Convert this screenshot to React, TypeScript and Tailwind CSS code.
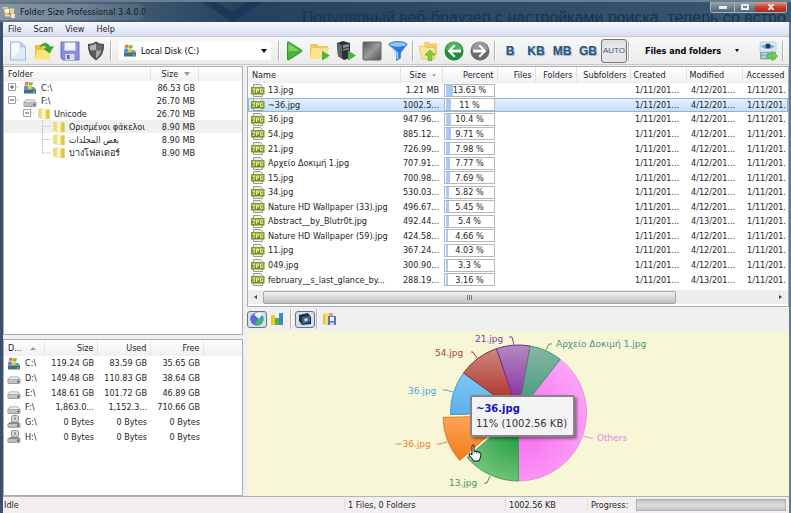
import type { ReactNode } from "react";
import clsx from "clsx";

const folders = [
  { name: "C:\\", size: "86.53 GB", depth: 0, icon: "system", toggle: "+" },
  { name: "F:\\", size: "26.70 MB", depth: 0, icon: "drive", toggle: "-" },
  { name: "Unicode", size: "26.70 MB", depth: 1, icon: "folder", toggle: "-" },
  { name: "Ορισμένοι φάκελοι", size: "8.90 MB", depth: 2, icon: "folder", selected: true },
  { name: "بعض المجلدات", size: "8.90 MB", depth: 2, icon: "folder" },
  { name: "บางโฟลเดอร์", size: "8.90 MB", depth: 2, icon: "folder" },
];

const drives = [
  { name: "C:\\", icon: "system", size: "119.24 GB", used: "83.59 GB", free: "35.65 GB" },
  { name: "D:\\", icon: "drive", size: "149.48 GB", used: "110.83 GB", free: "38.64 GB" },
  { name: "E:\\", icon: "drive", size: "148.61 GB", used: "101.72 GB", free: "46.89 GB" },
  { name: "F:\\", icon: "drive", size: "1,863.0...", used: "1,152.3...", free: "710.66 GB" },
  { name: "G:\\", icon: "optical", size: "0 Bytes", used: "0 Bytes", free: "0 Bytes" },
  { name: "H:\\", icon: "optical", size: "0 Bytes", used: "0 Bytes", free: "0 Bytes" },
];

const files = [
  { name: "13.jpg", size: "1.21 MB", percent: 13.63, modified: "4/12/201..." },
  { name: "~36.jpg", size: "1002.5...", percent: 11, modified: "4/12/201...", selected: true },
  { name: "36.jpg", size: "947.96...", percent: 10.4, modified: "4/12/201..." },
  { name: "54.jpg", size: "885.12...", percent: 9.71, modified: "4/12/201..." },
  { name: "21.jpg", size: "726.99...", percent: 7.98, modified: "4/12/201..." },
  { name: "Αρχείο Δοκιμή 1.jpg", size: "707.91...", percent: 7.77, modified: "4/12/201..." },
  { name: "15.jpg", size: "700.98...", percent: 7.69, modified: "4/12/201..." },
  { name: "34.jpg", size: "530.03...", percent: 5.82, modified: "4/12/201..." },
  { name: "Nature HD Wallpaper (33).jpg", size: "496.67...", percent: 5.45, modified: "4/12/201..." },
  { name: "Abstract__by_Blutr0t.jpg", size: "492.44...", percent: 5.4, modified: "4/13/201..." },
  { name: "Nature HD Wallpaper (59).jpg", size: "424.58...", percent: 4.66, modified: "4/12/201..." },
  { name: "11.jpg", size: "367.24...", percent: 4.03, modified: "4/12/201..." },
  { name: "049.jpg", size: "300.90...", percent: 3.3, modified: "4/12/201..." },
  { name: "february__s_last_glance_by...", size: "288.19...", percent: 3.16, modified: "4/13/201..." },
];

const slices = [
  { id: "others", percent: 39.51, from: "#fdb0f6", to: "#f56cf0", line: "#e58fdc" },
  { id: "s13", percent: 13.63, from: "#86d08c", to: "#2a9e48", line: "#4a9a58" },
  { id: "s36t", percent: 11, from: "#ffa45a", to: "#f47a1c", line: "#e07a2c" },
  { id: "s36", percent: 10.4, from: "#7cc8f2", to: "#5cb0ea", line: "#4a94bc" },
  { id: "s54", percent: 9.71, from: "#c98a7e", to: "#b01c1c", line: "#8c2a2a" },
  { id: "s21", percent: 7.98, from: "#b68ac0", to: "#7a1c9c", line: "#7c2a8c" },
  { id: "s1", percent: 7.77, from: "#86b8a4", to: "#3c9478", line: "#4a8c78" },
];

const labels = [
  { text: "21.jpg", x: 475, y: 342, color: "#8a3a9c", line: "M509 337h3l2 8" },
  { text: "54.jpg", x: 435, y: 356, color: "#b03a3a", line: "M471 352h2l4 6" },
  { text: "36.jpg", x: 408, y: 394, color: "#4aa8d8", line: "M443 390h3l7 2" },
  { text: "~36.jpg", x: 395, y: 447, color: "#e8822c", line: "M437 444h3l7-2" },
  { text: "13.jpg", x: 449, y: 486, color: "#3a9c50", line: "M484 483h3l3-7" },
  { text: "Others", x: 597, y: 441, color: "#e884dc", line: "M583 436l7 2h3" },
  { text: "Αρχείο Δοκιμή 1.jpg", x: 556, y: 347, color: "#4a9480", line: "M546 350l3-6h3" },
];

function DriveIcon({ kind }: { kind: string }) {
  if (kind === "folder") {
    return (
      <svg viewBox="0 0 12 13" className="h-[13px] w-3 shrink-0">
        <path d="M0 2.500L4 1v11l-4-1.500z" fill="#eedc84" />
        <path d="M4 2.500h7.500v9.500H4z" fill="#e8d468" />
        <path d="M4 .500l3 2v10.500l-3-2z" fill="#fdf7c8" />
        <path d="M7 2.500h1.500V12.500H7z" fill="#f4e694" />
        <path d="M8.500 2.500h3V12h-3z" fill="#dfc34a" />
      </svg>
    );
  }
  return (
    <svg viewBox="0 0 14 13" className="h-[13px] w-3.5 shrink-0">
      {kind === "system" && (
        <>
          <path d="M1 7.500L3 6h8l2 2v4H1z" fill="#6c98a8" />
          <path d="M1 9h12v3.500H1z" fill="#3f7088" />
          <path d="M2 1.500q2-1.500 3.500-.5l-.5 3q-2-1-3.500.5z" fill="#e8733a" />
          <path d="M6 1q2 1 4-.2l-.8 3.400Q7.500 5 5.500 4z" fill="#7cb63c" />
          <path d="M1.400 5q2-1.400 3.500-.5l-.6 3q-1.700-1-3.500.4z" fill="#4a8ee0" />
          <path d="M5.400 4.600q2 1 3.800-.1l-.8 3.300Q6.500 8.600 4.700 7.500z" fill="#f3cc3a" />
          <circle cx="11" cy="11" r=".8" fill="#8ef08a" />
        </>
      )}
      {kind === "drive" && (
        <>
          <path d="M.500 8.500L3 5.500h8l2.500 3v3.500l-1 1h-11l-1-1z" fill="#9a9a9a" />
          <path d="M1.500 8.300L3.500 6.300h7l2 2z" fill="#ededed" />
          <path d="M1.200 9h11.600v3H1.200z" fill="#c2c2c2" />
          <circle cx="11.300" cy="10.500" r="1" fill="#4a4a4a" />
        </>
      )}
      {kind === "optical" && (
        <>
          <rect x="4.500" y=".5" width="7" height="6.500" rx="2" fill="#dcdcdc" stroke="#8b8b8b" />
          <path d="M8 2v3" stroke="#8b8b8b" strokeWidth="1.500" />
          <path d="M.500 9L3 7h8.500l2 2v3l-1 .8h-11l-1-.8z" fill="#8a8a8a" />
          <path d="M1.300 9.200h11.400v2.500H1.300z" fill="#c8c8c8" />
          <circle cx="11" cy="10.500" r=".9" fill="#444" />
        </>
      )}
    </svg>
  );
}

function JpgIcon() {
  return (
    <svg viewBox="0 0 14 13" className="h-[13px] w-3.5 shrink-0">
      <path d="M2.500.5h7l2 2v10h-9z" fill="#ededed" stroke="#9a9a92" />
      <path d="M0 3h13.500v7.500H0z" fill="#76901e" />
      <path d="M.500 3.500h12.500v3H.5z" fill="#94aa38" />
      <path
        d="M1.500 5h2.500M3.200 5v3.500H1.500M5.500 9V5h2v2h-2M11.900 5H9.500v3.500h2.200V7h-1"
        fill="none"
        stroke="#eef2b8"
        strokeWidth=".9"
      />
    </svg>
  );
}

function Svg({ children }: { children: ReactNode }) {
  return (
    <svg viewBox="0 0 20 20" className="size-5 shrink-0">
      {children}
    </svg>
  );
}

function ToolButton({ label, active, children }: { label: string; active?: boolean; children: ReactNode }) {
  return (
    <button
      type="button"
      aria-label={label}
      className={clsx(
        "flex h-6 w-[26px] shrink-0 items-center justify-center rounded-[3px]",
        active && "border border-[#777] bg-[#e6e6e8] shadow-inner"
      )}
    >
      {children}
    </button>
  );
}

function Separator() {
  return <span className="mx-px h-5 w-0.5 shrink-0 border-l border-[#b2b2b2] bg-white" />;
}

function TitleBar() {
  return (
    <header className="relative flex h-[22px] shrink-0 items-center overflow-hidden border-t-2 border-[#6b7f90] bg-linear-to-r from-[#65788a] via-[#24425f] via-30% to-[#3b5670]">
      <div className="flex h-4 w-[146px] items-center gap-1 rounded-r-full bg-linear-to-r from-[#8795a2] via-[#74869a] to-[#4b637a] pl-0.5">
        <svg viewBox="0 0 14 13" className="h-[13px] w-3.5 shrink-0">
          <path d="M1 1h5l1 1.500h5v8H3z" fill="#e8d9a0" />
          <circle cx="5" cy="5" r="3" fill="#f4f4ee" stroke="#c39a5c" />
          <path d="M7 7l4 4" stroke="#b8813a" strokeWidth="2" />
          <path d="M9 8h4v4H9z" fill="#efe7c8" />
        </svg>
        <h1 className="text-[9px] whitespace-nowrap text-[#101820]">Folder Size Professional 3.4.0.0</h1>
      </div>
      <svg viewBox="0 0 60 20" className="ml-14 h-5 w-[60px] shrink-0">
        <path d="M0 0h14l16 10L46 0h14L30 20z" fill="#1c2f55" opacity=".7" />
      </svg>
      <p className="mt-3 ml-10 font-['Liberation_Sans'] text-base leading-4 whitespace-nowrap text-[#1b334c]">
        Популярный веб-браузер с настройками поиска, теперь со встро
      </p>
      <div className="absolute top-0 right-1 flex h-[11px] overflow-hidden rounded-b-[3px] border border-t-0 border-[#a6b2bf]">
        <button type="button" aria-label="Minimize" className="flex w-6 items-center justify-center border-r border-[#a6b2bf] bg-linear-to-b from-[#97a5b3] to-[#4f6377]">
          <span className="h-[3px] w-2 bg-[#e8ecf0]" />
        </button>
        <button type="button" aria-label="Maximize" className="flex w-5 items-center justify-center bg-linear-to-b from-[#97a5b3] to-[#4f6377]">
          <span className="h-1.5 w-2 border-2 border-[#e8ecf0]" />
        </button>
        <button type="button" aria-label="Close" className="flex w-[31px] items-center justify-center bg-linear-to-b from-[#e09a8c] via-[#c9412a] to-[#a92c1a]">
          <svg viewBox="0 0 8 6" className="h-1.5 w-2">
            <path d="M1.500 0l5 6M6.500 0l-5 6" stroke="#f4e4e0" strokeWidth="2" />
          </svg>
        </button>
      </div>
    </header>
  );
}

function Toolbar() {
  return (
    <div className="flex h-7 shrink-0 items-center border-b border-[#c8c8c8] bg-linear-to-b from-[#f8f8f8] to-[#ebebeb] pl-0.5">
      <ToolButton label="New">
        <Svg>
          <path d="M2.500 1h10l5 5v13h-15z" fill="#dcebfa" stroke="#9cb8dc" />
          <path d="M4 2h7v8l-7 7z" fill="#f8fcff" />
          <path d="M12.500 1v5h5z" fill="#b8d2f0" stroke="#9cb8dc" strokeWidth=".5" />
        </Svg>
      </ToolButton>
      <ToolButton label="Open">
        <Svg>
          <path d="M1 4h6l1.500 2H16v12H1z" fill="#e8c43c" />
          <path d="M3 9h15l-3 9.500H1z" fill="#fbe67c" />
          <path d="M6 6c2-5 8-5 10 0l3.500-.5L15.500 12 10 8l3-.8C11.500 4.500 8.500 4 6 6z" fill="#2fae2c" stroke="#1d8a22" strokeWidth=".5" />
        </Svg>
      </ToolButton>
      <ToolButton label="Save">
        <Svg>
          <path d="M1 1h18v18H3l-2-2z" fill="#8c8edb" stroke="#6c70c2" />
          <path d="M4.500 1.500h11v8h-11z" fill="#f0f2fc" />
          <path d="M5.500 13h9v6h-9z" fill="#d9dcf6" />
          <path d="M7 14h2.500v4H7z" fill="#595db4" />
        </Svg>
      </ToolButton>
      <ToolButton label="Permissions">
        <Svg>
          <path d="M10 .500Q13 3 18 3q.8 11-8 16.500Q1.200 14 2 3q5 0 8-2.500z" fill="#4c4c4c" />
          <path d="M10 2.500Q7 4.300 3.700 4.500q-.1 2.800.7 5H10z" fill="#b4b4b4" />
          <path d="M10 2.500q3 1.800 6.300 2 .1 2.800-.7 5H10z" fill="#6a6a6a" />
          <path d="M4.400 9.500H10v8q-4.200-3-5.600-8z" fill="#5c5c5c" />
          <path d="M15.600 9.500H10v8q4.200-3 5.600-8z" fill="#a4a4a4" />
        </Svg>
      </ToolButton>
      <Separator />
      <div className="relative mx-1.5 flex h-[18px] w-[152px] items-center bg-white pl-1">
        <DriveIcon kind="system" />
        <select aria-label="Drive" className="h-full min-w-0 flex-1 appearance-none bg-transparent pl-1 text-[9px] text-black">
          <option>Local Disk (C:)</option>
        </select>
        <span className="pointer-events-none absolute right-1 h-0 w-0 border-x-[3px] border-t-4 border-x-transparent border-t-black" />
      </div>
      <Separator />
      <ToolButton label="Start scan">
        <Svg>
          <path d="M3.500 1.500q0-1 1-.6L17.500 9q1 .9 0 1.800L4.500 19q-1 .4-1-.6z" fill="#48b43a" stroke="#2f9427" />
          <path d="M4.500 2.500L15 9.500l-10.500 1z" fill="#7fd45e" />
        </Svg>
      </ToolButton>
      <ToolButton label="Scan folder">
        <Svg>
          <path d="M0 3h7l1.500 2H18v13H0z" fill="#ecc95c" />
          <path d="M2 7h17l-2 11H0z" fill="#fbe48c" />
          <path d="M12 10l8 4.500-8 5z" fill="#48b53c" />
        </Svg>
      </ToolButton>
      <ToolButton label="Scan computer">
        <Svg>
          <path d="M1 2l6-2 7 2v15l-6 2-6-4z" fill="#2d2f36" />
          <path d="M1 2l5 2v13l-4-2z" fill="#60646e" />
          <path d="M7 4l6-1v3L7 7zM7 8l6-1v1.500L7 9.500z" fill="#8a8e98" />
          <path d="M12 9.500l8 5-8 5z" fill="#48b53c" />
        </Svg>
      </ToolButton>
      <ToolButton label="Stop">
        <svg viewBox="0 0 20 20" className="size-5 shrink-0">
          <defs>
            <linearGradient id="stop" x1="0" y1="0" x2="1" y2="1">
              <stop offset="0" stopColor="#555" />
              <stop offset=".5" stopColor="#9a9a9a" />
              <stop offset="1" stopColor="#505050" />
            </linearGradient>
          </defs>
          <rect x="1" y="1" width="18" height="18" rx="1" fill="url(#stop)" stroke="#666" />
        </svg>
      </ToolButton>
      <ToolButton label="Filter">
        <Svg>
          <path d="M1 3l7.500 9v7.500l4-2.500v-5L19 3z" fill="#2a7be0" stroke="#1c5cb8" strokeWidth=".5" />
          <ellipse cx="10" cy="3.500" rx="9" ry="2.800" fill="#8cc6fa" stroke="#2a6fd0" />
          <path d="M4 7l5.500 5v6" fill="none" stroke="#a6d6ff" strokeWidth="1.500" />
        </Svg>
      </ToolButton>
      <Separator />
      <ToolButton label="Up one level">
        <Svg>
          <path d="M6 1h5l1 1.500h7V14H8z" fill="#f0cf68" />
          <path d="M1 5h6l1 1.500h9V18H4z" fill="#fae596" stroke="#dcb64c" strokeWidth=".6" />
          <path d="M12 9l5 5h-3v5.500h-4V14H7z" fill="#7cd140" stroke="#4f9c24" strokeWidth=".6" />
        </Svg>
      </ToolButton>
      <ToolButton label="Back">
        <Svg>
          <circle cx="10" cy="10" r="9.500" fill="#218a34" />
          <path d="M2 9a8 8 0 0 1 16 0q-8-3-16 0z" fill="#53b45c" />
          <path d="M10 3.500L3.500 10l6.500 6.500 1.500-1.500L8 11.500h9v-3H8L11.500 5z" fill="#fff" />
        </Svg>
      </ToolButton>
      <ToolButton label="Forward">
        <Svg>
          <circle cx="10" cy="10" r="9.500" fill="#6c6c6c" />
          <path d="M2 9a8 8 0 0 1 16 0q-8-3-16 0z" fill="#999" />
          <path d="M10 3.500l6.500 6.500-6.500 6.500L8.500 15l3.500-3.500H3v-3h9L8.500 5z" fill="#fff" />
        </Svg>
      </ToolButton>
      <Separator />
      {["B", "KB", "MB", "GB"].map((unit) => (
        <ToolButton key={unit} label={unit}>
          <span className="font-['Liberation_Sans'] text-xs font-bold text-[#2a547e] [text-shadow:1px_1px_1px_#8fb0cc]">
            {unit}
          </span>
        </ToolButton>
      ))}
      <ToolButton label="Auto units" active>
        <span className="font-['Liberation_Sans'] text-[8px] text-[#43607c]">AUTO</span>
      </ToolButton>
      <Separator />
      <button type="button" className="ml-3.5 flex items-center gap-3.5 text-[9px] font-bold whitespace-nowrap text-black">
        Files and folders
        <span className="h-0 w-0 border-x-2 border-t-[3px] border-x-transparent border-t-black" />
      </button>
      <span className="flex-1" />
      <ToolButton label="Export">
        <Svg>
          <path d="M2 1h16v10H2z" fill="#dbe7f2" stroke="#a8bccc" strokeWidth=".6" />
          <path d="M3 5.500q7-5 14 0-7 5-14 0z" fill="#7ca8d8" />
          <circle cx="10" cy="5" r="2.500" fill="#163c74" />
          <path d="M2 11h16v7.500H2z" fill="#8cabc0" />
          <path d="M4 13h5M4 16h4" stroke="#e4eef4" />
          <path d="M9 13h5v-3l6 5-6 5v-3H9z" fill="#6ad04a" stroke="#46a636" strokeWidth=".5" />
        </Svg>
      </ToolButton>
      <Separator />
      <span className="w-1" />
    </div>
  );
}

const th = "border-r border-[#e3e3e8] px-[3px] font-normal";
const headRow = "bg-linear-to-b from-white to-[#f0f0f3]";

function FolderTree() {
  return (
    <section className="min-h-0 flex-1 overflow-hidden border border-[#a9adb5] bg-white">
      <table className="w-full table-fixed border-collapse whitespace-nowrap">
        <thead>
          <tr className={clsx("h-3.5", headRow)}>
            <th className={clsx(th, "pl-1 text-left")}>Folder</th>
            <th className={clsx(th, "w-12 text-left")}>
              <span className="flex items-center gap-1.5 pl-2">
                Size
                <span className="h-0 w-0 border-x-[3px] border-t-4 border-x-transparent border-t-[#999]" />
              </span>
            </th>
            <th className="w-11" />
          </tr>
        </thead>
        <tbody>
          {folders.map((row) => (
            <tr key={row.name} className={clsx("h-[13px]", row.selected && "bg-[#f0f0f0]")}>
              <td className="p-0 pl-1">
                <div className="flex h-[13px] items-center">
                  {row.depth > 0 && <span className="w-[15px] shrink-0" />}
                  {row.depth > 1 && (
                    <svg viewBox="0 0 30 13" className="h-[13px] w-[30px] shrink-0">
                      <path
                        d={row.name === "บางโฟลเดอร์" ? "M19.500 0v7H28" : "M19.500 0v13M19.500 6.500H28"}
                        fill="none"
                        stroke="#b4b4b4"
                        strokeDasharray="1 1"
                      />
                    </svg>
                  )}
                  {row.toggle && (
                    <button type="button" aria-label="Toggle folder" className="flex h-[13px] w-[15px] shrink-0 items-center">
                      <svg viewBox="0 0 12 9" className="h-[9px] w-3">
                        <path d="M.500.5h7v7h-7z" fill="#fff" stroke="#a2a2a2" />
                        <path d={row.toggle === "+" ? "M2 4h4M4 2v4" : "M2 4h4"} stroke="#3a4a80" />
                        <path d="M8 4h4" stroke="#b4b4b4" strokeDasharray="1 1" />
                      </svg>
                    </button>
                  )}
                  <DriveIcon kind={row.icon} />
                  <span className="ml-1">{row.name}</span>
                </div>
              </td>
              <td className="p-0 pr-[3px] text-right">{row.size}</td>
              <td />
            </tr>
          ))}
        </tbody>
      </table>
    </section>
  );
}

function DriveList() {
  return (
    <section className="h-[157px] shrink-0 overflow-hidden border border-[#a9adb5] bg-white">
      <table className="h-[104px] w-full table-fixed border-collapse whitespace-nowrap">
        <thead>
          <tr className={clsx("h-4", headRow)}>
            <th className={clsx(th, "w-10 pl-1 text-left")}>
              <span className="flex items-center gap-2">
                D...
                <span className="h-0 w-0 border-x-[3px] border-b-[3px] border-x-transparent border-b-[#8a9cac]" />
              </span>
            </th>
            <th className={clsx(th, "w-[53px] text-right")}>Size</th>
            <th className={clsx(th, "w-[53px] text-right")}>Used</th>
            <th className={clsx(th, "w-[53px] text-right")}>Free</th>
            <th />
          </tr>
        </thead>
        <tbody>
          {drives.map((drive) => (
            <tr key={drive.name}>
              <td className="p-0 pl-[3px]">
                <div className="flex items-center gap-1">
                  <DriveIcon kind={drive.icon} />
                  {drive.name}
                </div>
              </td>
              <td className="p-0 pr-[3px] text-right">{drive.size}</td>
              <td className="p-0 pr-[3px] text-right">{drive.used}</td>
              <td className="p-0 pr-[3px] text-right">{drive.free}</td>
              <td />
            </tr>
          ))}
        </tbody>
      </table>
    </section>
  );
}

function FileList() {
  return (
    <section className="shrink-0 overflow-hidden border border-[#a9adb5] bg-white">
      <table className="h-[220px] w-full table-fixed border-collapse whitespace-nowrap">
        <thead>
          <tr className={clsx("h-4", headRow)}>
            <th className={clsx(th, "w-[152px] pl-1 text-left")}>Name</th>
            <th className={clsx(th, "w-[42px] text-left")}>
              <span className="flex items-center gap-1.5 pl-1.5">
                Size
                <span className="h-0 w-0 border-x-2 border-t-[3px] border-x-transparent border-t-[#8fb8cc]" />
              </span>
            </th>
            <th className={clsx(th, "w-[55px] text-right")}>Percent</th>
            <th className={clsx(th, "w-[38px] text-right")}>Files</th>
            <th className={clsx(th, "w-[41px] text-right")}>Folders</th>
            <th className={clsx(th, "w-[54px] text-right")}>Subfolders</th>
            <th className={clsx(th, "w-14 text-left")}>Created</th>
            <th className={clsx(th, "w-14 text-left")}>Modified</th>
            <th className="px-1 text-left font-normal">Accessed</th>
          </tr>
        </thead>
        <tbody>
          {files.map((file) => (
            <tr
              key={file.name}
              className={clsx(file.selected && "bg-linear-to-b from-[#e6f1fd] to-[#c3dbf8] outline outline-[#8fb4e0] -outline-offset-1")}
            >
              <td className="p-0 pl-[3px]">
                <div className="flex items-center gap-[3px]">
                  <JpgIcon />
                  {file.name}
                </div>
              </td>
              <td className="p-0 pr-[3px] text-right">{file.size}</td>
              <td className="px-[2px] py-0">
                <div className="relative flex h-[13px] items-center justify-center border border-[#b4b8be] bg-white">
                  <span className="absolute left-px h-full bg-[#a9c8f8]" style={{ width: `${file.percent}%` }} />
                  <span className="relative">{file.percent} %</span>
                </div>
              </td>
              <td />
              <td />
              <td />
              <td className="p-0 pl-[5px]">1/11/201...</td>
              <td className="p-0 pl-[5px]">{file.modified}</td>
              <td className="p-0 pl-[5px]">1/11/201.</td>
            </tr>
          ))}
        </tbody>
      </table>
      <div className="mt-[3px] mb-0.5 flex h-3.5 items-center bg-[#ededed]">
        <span className="mx-1.5 h-0 w-0 border-y-2 border-r-[3px] border-y-transparent border-r-[#444]" />
        <div className="flex flex-1">
          <div className="flex h-[13px] w-[81%] items-center justify-center gap-px rounded-xs border border-[#a5a5a5] bg-linear-to-b from-[#f2f2f2] via-[#d9d9d9] to-[#c0c0c0]">
            <span className="h-[5px] w-px bg-[#777]" />
            <span className="h-[5px] w-px bg-[#777]" />
            <span className="h-[5px] w-px bg-[#777]" />
          </div>
        </div>
        <span className="mx-1.5 h-0 w-0 border-y-2 border-l-[3px] border-y-transparent border-l-[#444]" />
      </div>
    </section>
  );
}

function ChartTools() {
  const button = "flex h-[17px] w-5 items-center justify-center rounded-[3px]";
  const pressed = "border border-[#6e7480] bg-[#d9dfe6]";
  return (
    <div className="flex h-6 shrink-0 items-center">
      <button type="button" aria-label="Pie chart" className={clsx(button, pressed)}>
        <svg viewBox="0 0 14 14" className="size-3.5">
          <circle cx="7" cy="7" r="6.500" fill="#3c86d0" />
          <path d="M8 7L2 2.500A6.500 6.500 0 0 0 4 12.700z" fill="#5a6cd0" />
          <path d="M8 7l5.500-1a6.500 6.500 0 0 1-9 7z" fill="#48b070" />
          <path d="M9 7L4 2.500q4-3.500 8.500 0z" fill="#f2f6fa" />
        </svg>
      </button>
      <button type="button" aria-label="Bar chart" className={clsx(button, "mr-0.5")}>
        <svg viewBox="0 0 14 14" className="size-3.5">
          <path d="M1 3h4v10H1z" fill="#f1c62c" />
          <path d="M5 6h4v7H5z" fill="#52b33c" />
          <path d="M9 1h4v12H9z" fill="#3f86d2" />
        </svg>
      </button>
      <Separator />
      <button type="button" aria-label="3D view" className={clsx(button, pressed, "ml-0.5")}>
        <svg viewBox="0 0 14 14" className="size-3.5">
          <path d="M1 3l9-2 3 4v7l-9 1-3-4z" fill="#1d2f48" />
          <path d="M4 5l8-1v6l-8 2z" fill="#3f6590" />
          <path d="M6 7l3-1 1 2-3 2z" fill="#c6dcf0" />
        </svg>
      </button>
      <Separator />
      <button type="button" aria-label="Save chart" className={button}>
        <svg viewBox="0 0 14 14" className="size-3.5">
          <path d="M1 3l3-2v12l-3-1z" fill="#e6c13e" />
          <path d="M3 1h4v12H3z" fill="#f7dc7c" />
          <path d="M7 1h4v5H7z" fill="#e0a094" />
          <path d="M6 4h8v9H6z" fill="#5a76c4" />
          <path d="M8 5h4v4H8z" fill="#f3f6fc" />
          <path d="M8 10.500h4V13H8z" fill="#cdd8f0" />
        </svg>
      </button>
    </div>
  );
}

// Angles run clockwise from twelve o'clock
function slicePath(start: number, end: number, cx: number, cy: number, r: number) {
  const x1 = cx + r * Math.sin(start);
  const y1 = cy - r * Math.cos(start);
  const x2 = cx + r * Math.sin(end);
  const y2 = cy - r * Math.cos(end);
  return `M${cx} ${cy}L${x1} ${y1}A${r} ${r} 0 0 1 ${x2} ${y2}Z`;
}

function PieChart() {
  let angle = (37.8 * Math.PI) / 180;
  return (
    <section className="relative min-h-0 flex-1 overflow-hidden bg-[#f7f7d8]">
      <svg viewBox="247 331 542 165" className="h-full w-full">
        <defs>
          {slices.map((slice) => (
            <linearGradient key={slice.id} id={slice.id} x1="0" y1="0" x2="0" y2="1">
              <stop offset="0" stopColor={slice.from} />
              <stop offset="1" stopColor={slice.to} />
            </linearGradient>
          ))}
          <radialGradient id="othersGlow" gradientUnits="userSpaceOnUse" cx="519" cy="425" r="75">
            <stop offset="0" stopColor="#f666f0" />
            <stop offset="1" stopColor="#fda4f6" />
          </radialGradient>
          <radialGradient id="s13Glow" gradientUnits="userSpaceOnUse" cx="519" cy="430" r="62">
            <stop offset="0" stopColor="#1c983c" />
            <stop offset="1" stopColor="#7ccb84" />
          </radialGradient>
        </defs>
        {slices.map((slice) => {
          const start = angle;
          const end = angle + (slice.percent / 100) * 2 * Math.PI;
          angle = end;
          const mid = (start + end) / 2;
          const shift = slice.id === "s36t" ? 8 : 0;
          const fill = slice.id === "others" || slice.id === "s13" ? `${slice.id}Glow` : slice.id;
          return (
            <path
              key={slice.id}
              d={slicePath(start, end, 518.5 + shift * Math.sin(mid), 413 - shift * Math.cos(mid), 68)}
              fill={`url(#${fill})`}
              stroke={slice.line}
            />
          );
        })}
        {labels.map((label) => (
          <g key={label.text}>
            <path d={label.line} fill="none" stroke={label.color} />
            <text x={label.x} y={label.y} fill={label.color} className="font-['DejaVu_Sans'] text-[9px]">
              {label.text}
            </text>
          </g>
        ))}
      </svg>
      <div
        role="tooltip"
        className="absolute top-16 left-[223px] rounded-[3px] border-2 border-[#858585] bg-[#f3f3f6] py-1 pr-1.5 pl-1 font-['DejaVu_Sans'] text-[10px] leading-[15px] whitespace-nowrap text-[#333] shadow-[2px_2px_3px_#0006]"
      >
        <strong className="block text-[#1414b4]">~36.jpg</strong>
        11% (1002.56 KB)
      </div>
      <svg viewBox="0 0 14 18" className="absolute top-[113px] left-[221px] h-[18px] w-3.5">
        <path
          d="M4 1.500q1.200-1 2 0V7l5 1q2 .6 2 2.500l-1 4-1 2.500H5.500L4.500 15 1 11q-.5-1.500 1-1.500l2 1.500z"
          fill="#fff"
          stroke="#111"
        />
        <path d="M6 7v2.500M8.500 7.500v2M10.800 8v2" stroke="#444" strokeWidth=".7" />
      </svg>
    </section>
  );
}

export default function App() {
  return (
    <div className="flex h-screen flex-col overflow-hidden bg-[#f0f0f0] font-['DejaVu_Sans_Condensed','Noto_Sans',sans-serif] text-[9px] leading-3 text-[#1e1e1e]">
      <TitleBar />
      <div className="flex min-h-0 flex-1 flex-col border-r-2 border-l-[3px] border-r-[#66788c] border-l-[#38506e]">
        <nav className="flex h-[15px] shrink-0 items-center gap-3 border-b border-[#c5c8d4] bg-linear-to-b from-[#f6f8fe] to-[#d9def2] pl-[5px]">
          {["File", "Scan", "View", "Help"].map((item) => (
            <button key={item} type="button">
              {item}
            </button>
          ))}
        </nav>
        <Toolbar />
        <main className="flex min-h-0 flex-1 gap-1 pt-px">
          <div className="flex w-60 shrink-0 flex-col gap-1">
            <FolderTree />
            <DriveList />
          </div>
          <div className="flex min-w-0 flex-1 flex-col">
            <FileList />
            <ChartTools />
            <PieChart />
          </div>
        </main>
        <footer className="flex h-[17px] shrink-0 items-center border-t border-[#b4b4b8] bg-[#f3eff1] whitespace-nowrap">
          <span className="w-[341px] pl-px">Idle</span>
          <span className="w-[161px] border-l border-[#ddd] pl-[3px]">1 Files, 0 Folders</span>
          <span className="w-[82px] border-l border-[#ddd] pl-[3px]">1002.56 KB</span>
          <span className="border-l border-[#ddd] pl-[3px]">Progress:</span>
          <div
            role="progressbar"
            aria-label="Progress"
            className="mr-[3px] ml-2 h-3 flex-1 border border-[#b0b0b0] bg-linear-to-b from-[#c2c2c2] via-[#dedede] to-[#c6c6c6]"
          />
        </footer>
      </div>
    </div>
  );
}
